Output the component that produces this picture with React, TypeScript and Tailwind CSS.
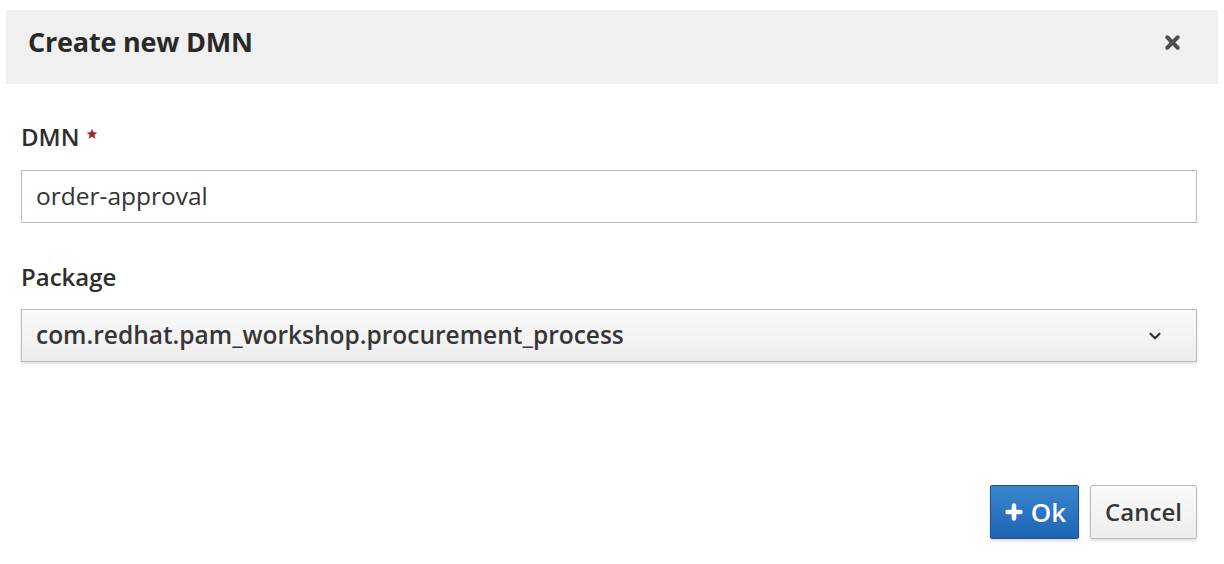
import { X, ChevronDown, Plus } from "lucide-react";

/** Modal for creating a new DMN asset. */
export default function App(): JSX.Element {
  return (
    <div className="h-[564px] w-[1224px] bg-white pt-[10px] font-['Open_Sans',sans-serif] text-[#363636]">
      <div className="mx-[6px] flex h-[74px] items-center justify-between bg-[#f0f0f0] pb-[9px] pl-[22px] pr-[35px]">
        <h2 className="text-[27px] font-bold tracking-[-0.2px] text-[#292929]">Create new DMN</h2>
        <X className="h-[21px] w-[21px] text-[#4d4d4d]" strokeWidth={4.5} />
      </div>

      <div className="px-[21px] pt-[35px]">
        <label className="flex items-center text-[24px] font-semibold text-[#2e2e2e]">
          DMN
          <svg viewBox="0 0 24 24" className="ml-[6px] mb-[6px] h-[12px] w-[12px] fill-[#a3262c]">
            <path d="M12 1.5l3.1 7 7.4.6-5.6 4.9 1.7 7.4L12 17.5l-6.6 3.9 1.7-7.4L1.5 9.1l7.4-.6z" />
          </svg>
        </label>
        <div className="mt-[15px] flex h-[53px] w-[1176px] items-center border border-[#bbbbbb] px-[14px] text-[24.5px] text-[#333]">
          order-approval
        </div>

        <label className="mt-[36px] block text-[24px] font-semibold text-[#2e2e2e]">Package</label>
        <div className="mt-[14px] flex h-[53px] w-[1176px] items-center justify-between border border-[#bbbbbb] bg-gradient-to-b from-[#fafafa] to-[#ededed] pl-[14px] pr-[32px] text-[24.5px] font-semibold text-[#363636] shadow-[0_2px_3px_rgba(0,0,0,0.12)]">
          <span>com.redhat.pam_workshop.procurement_process</span>
          <ChevronDown className="h-[18px] w-[18px] text-[#333]" strokeWidth={3} />
        </div>

        <div className="mt-[123px] flex justify-end gap-[11px] pr-[6px]">
          <button className="flex h-[54px] w-[89px] items-center justify-center gap-[6px] rounded-[2px] border border-[#1b4f8f] bg-gradient-to-b from-[#3a87cf] to-[#1f63b5] text-[26px] font-semibold text-white shadow-[0_2px_3px_rgba(0,0,0,0.15)]">
            <Plus className="h-[22px] w-[22px]" strokeWidth={5} />
            Ok
          </button>
          <button className="h-[54px] w-[107px] rounded-[2px] border border-[#bbbbbb] bg-gradient-to-b from-[#fafafa] to-[#ededed] text-[24px] font-semibold text-[#363636] shadow-[0_2px_3px_rgba(0,0,0,0.12)]">
            Cancel
          </button>
        </div>
      </div>
    </div>
  );
}
